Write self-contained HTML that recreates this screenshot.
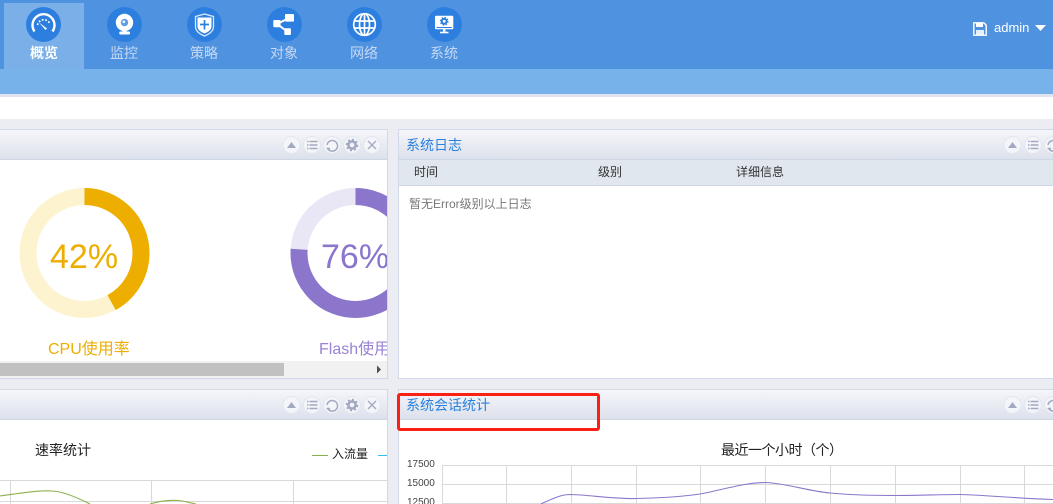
<!DOCTYPE html>
<html><head><meta charset="utf-8">
<style>
html,body{margin:0;padding:0;width:1053px;height:504px;overflow:hidden;background:#ecedf3;font-family:"Liberation Sans","Noto Sans CJK SC",sans-serif;}
#root{position:relative;width:1053px;height:504px;overflow:hidden;background:#ecedf3}
#root div,#root svg{position:absolute;box-sizing:border-box}
.t{white-space:nowrap;line-height:1}
.nav{font-size:14px;color:#c5d9f3;width:80px;text-align:center;top:46px}
.ic{width:35px;height:35px;top:7px}
.ph{background:linear-gradient(#f5f6fa,#dde1ec);border-bottom:1px solid #cfd6e6}
.panel{background:#fff;border:1px solid #d0d8ea}
</style></head><body><div id="root">
<div style="left:0;top:0;width:1053px;height:69px;background:#4f92e0"></div>
<div style="left:4px;top:3px;width:80px;height:66px;background:#7aafe8"></div>
<div style="left:0;top:69px;width:1053px;height:25px;background:#78b2ea"></div>
<div style="left:0;top:94px;width:1053px;height:3px;background:#e0e4f0"></div>
<div style="left:0;top:97px;width:1053px;height:22px;background:#fff"></div>

<svg class="ic" style="left:26px" viewBox="0 0 35 35"><circle cx="17.5" cy="17.5" r="17.5" fill="#2d7fdf"/><path d="M8.500 24.500a11 11 0 1 1 18 0" fill="none" stroke="#fff" stroke-width="2.400"/><path d="M11.500 18a6.500 6.500 0 0 1 12-2" fill="none" stroke="#fff" stroke-width="1.600" stroke-dasharray="1.800 1.600"/><path d="M13 15.500l8 6-1.500 1.500z" fill="#fff"/></svg>
<svg class="ic" style="left:107px" viewBox="0 0 35 35"><circle cx="17.5" cy="17.500" r="17.500" fill="#2d7fdf"/><circle cx="17.500" cy="15.500" r="8.700" fill="#fff"/><circle cx="17.500" cy="15.500" r="3.700" fill="#5e9fe6"/><circle cx="16.800" cy="14.800" r="1.300" fill="#fff"/><path d="M15.500 23h4v2h-4z" fill="#fff"/><rect x="12.300" y="24.500" width="10.700" height="3" rx="1" fill="#fff"/></svg>
<svg class="ic" style="left:187px" viewBox="0 0 35 35"><circle cx="17.500" cy="17.500" r="17.500" fill="#2d7fdf"/><path d="M17.500 7l9 2.500v10c0 4.500-4 7.500-9 9.500-5-2-9-5-9-9.500v-10z" fill="none" stroke="#dbe9fa" stroke-width="1.300"/><path d="M10.500 10.500h14v9c0 3.300-3.200 5.500-7 7-3.800-1.500-7-3.700-7-7z" fill="#fff"/><path d="M17.500 13v9.500M13 17.500h9" stroke="#2d7fdf" stroke-width="1.700"/></svg>
<svg class="ic" style="left:267px" viewBox="0 0 35 35"><circle cx="17.500" cy="17.500" r="17.500" fill="#2d7fdf"/><path d="M10 17l12-6M10 17l11 8" stroke="#fff" stroke-width="2"/><rect x="6.300" y="13" width="7.300" height="7.300" rx="1" fill="#fff"/><rect x="18" y="7" width="9" height="7.600" rx="1" fill="#fff"/><rect x="17.300" y="21.300" width="6.600" height="6.700" rx="1" fill="#fff"/></svg>
<svg class="ic" style="left:347px" viewBox="0 0 35 35"><circle cx="17.500" cy="17.500" r="17.500" fill="#2d7fdf"/><g fill="none" stroke="#fff" stroke-width="1.700"><circle cx="17.500" cy="17.500" r="10.800"/><ellipse cx="17.500" cy="17.500" rx="5" ry="10.800"/><path d="M17.500 7v21M7 14h21M7 21h21"/></g></svg>
<svg class="ic" style="left:427px" viewBox="0 0 35 35"><circle cx="17.500" cy="17.500" r="17.500" fill="#2d7fdf"/><rect x="8" y="8.700" width="18.300" height="13.600" rx="1" fill="#fff"/><rect x="9.500" y="20" width="15.300" height="1" fill="#2d7fdf"/><circle cx="17.200" cy="14.300" r="2.400" fill="none" stroke="#2d7fdf" stroke-width="2"/><circle cx="17.200" cy="14.300" r="3.800" fill="none" stroke="#2d7fdf" stroke-width="1.200" stroke-dasharray="1.500 1.500"/><path d="M16 22h2.500v2.700H16z" fill="#fff"/><rect x="13" y="24.700" width="8.500" height="1.600" fill="#fff"/></svg>

<div class="t nav" style="left:4px;color:#fff;font-weight:bold">概览</div>
<div class="t nav" style="left:84px">监控</div>
<div class="t nav" style="left:164px">策略</div>
<div class="t nav" style="left:244px">对象</div>
<div class="t nav" style="left:324px">网络</div>
<div class="t nav" style="left:404px">系统</div>

<svg style="left:973px;top:22px;width:14px;height:14px" viewBox="0 0 14 14"><path d="M.8.800h10l2.400 2.400v10H.8z" fill="none" stroke="#fff" stroke-width="1.400"/><rect x="3" y="1" width="7" height="4" fill="#fff"/><rect x="3" y="8" width="8" height="5" fill="#fff" opacity=".85"/></svg>
<div class="t" style="left:994px;top:21px;font-size:13px;color:#fff">admin</div>
<svg style="left:1035px;top:25px;width:11px;height:6px" viewBox="0 0 11 6"><path d="M0 0h11L5.500 6z" fill="#fff"/></svg>

<!-- top-left panel -->
<div class="panel" style="left:-2px;top:129px;width:390px;height:250px"></div>
<div class="ph" style="left:0;top:130px;width:387px;height:30px"></div>
<svg style="left:0;top:160px;width:387px;height:201px" viewBox="0 160 387 201">
<circle cx="84.500" cy="253" r="56.500" fill="none" stroke="#fdf3cf" stroke-width="17"/>
<circle cx="84.500" cy="253" r="56.500" fill="none" stroke="#edae00" stroke-width="17" stroke-dasharray="149.100 355" transform="rotate(-90 84.500 253)"/>
<circle cx="355.500" cy="253" r="56.500" fill="none" stroke="#e9e6f6" stroke-width="17"/>
<circle cx="355.500" cy="253" r="56.500" fill="none" stroke="#8b76cc" stroke-width="17" stroke-dasharray="269.800 355" transform="rotate(-90 355.500 253)"/>
</svg>
<div style="left:0;top:160px;width:387px;height:201px;overflow:hidden">
<div class="t" style="left:50px;top:80px;font-size:34px;color:#edae00;font-family:'Liberation Sans',sans-serif">42%</div>
<div class="t" style="left:321px;top:80px;font-size:34px;color:#8b76cc;font-family:'Liberation Sans',sans-serif">76%</div>
<div class="t" style="left:48px;top:182px;font-size:16px;color:#edae00">CPU使用率</div>
<div class="t" style="left:319px;top:182px;font-size:16px;color:#9a82d4">Flash使用率</div>
</div>
<div style="left:0;top:361px;width:387px;height:17px;background:#f1f1f1"></div>
<div style="left:0;top:363px;width:284px;height:13px;background:#c1c1c1"></div>
<svg style="left:376px;top:365px;width:6px;height:9px" viewBox="0 0 6 9"><path d="M1 .5l4 4-4 4z" fill="#505050"/></svg>

<!-- top-right panel -->
<div class="panel" style="left:398px;top:129px;width:660px;height:250px"></div>
<div class="ph" style="left:399px;top:130px;width:654px;height:30px"></div>
<div class="t" style="left:406px;top:138px;font-size:14px;color:#2a80dc">系统日志</div>
<div style="left:399px;top:160px;width:654px;height:26px;background:#e1e7ef;border-bottom:1px solid #d0d8e6"></div>
<div class="t" style="left:414px;top:166px;font-size:12px;color:#333">时间</div>
<div class="t" style="left:598px;top:166px;font-size:12px;color:#333">级别</div>
<div class="t" style="left:736px;top:166px;font-size:12px;color:#333">详细信息</div>
<div class="t" style="left:409px;top:198px;font-size:12px;color:#777">暂无Error级别以上日志</div>

<!-- bottom-left panel -->
<div class="panel" style="left:-2px;top:389px;width:390px;height:130px"></div>
<div class="ph" style="left:0;top:390px;width:387px;height:30px"></div>
<div class="t" style="left:35px;top:443px;font-size:14px;color:#222">速率统计</div>
<div style="left:312px;top:455px;width:16px;height:1px;background:#8bb04a"></div>
<div class="t" style="left:332px;top:448px;font-size:12px;color:#222">入流量</div>
<div style="left:378px;top:455px;width:9px;height:1px;background:#2fc0ee"></div>
<svg style="left:0;top:475px;width:387px;height:29px" viewBox="0 475 387 29">
<path d="M0 480.500H387M0 501.500H387M10.500 480V504M151.500 480V504M293.500 480V504" stroke="#d9d9d9" fill="none"/>
<path d="M0 496C15 494 38 490 52 491C62 491 78 498 90 504M150 504C160 501 170 500 178 500.500C185 501 190 503 196 504" stroke="#8bb04a" stroke-width="1.100" fill="none"/>
</svg>

<!-- bottom-right panel -->
<div class="panel" style="left:398px;top:389px;width:660px;height:130px"></div>
<div class="ph" style="left:399px;top:390px;width:654px;height:30px"></div>
<div class="t" style="left:406px;top:398px;font-size:14px;color:#2a80dc">系统会话统计</div>
<div class="t" style="left:721px;top:443px;font-size:14px;color:#222;letter-spacing:-.5px">最近一个小时（个）</div>
<div class="t" style="left:407px;top:460px;font-size:10px;color:#444">17500</div>
<div class="t" style="left:407px;top:479px;font-size:10px;color:#444">15000</div>
<div class="t" style="left:407px;top:498px;font-size:10px;color:#444">12500</div>
<svg style="left:430px;top:460px;width:623px;height:44px" viewBox="430 460 623 44">
<path d="M442 465.500H1053M442 484.500H1053M442 503.500H1053M442.500 465V504M506.500 465V504M571.500 465V504M636.500 465V504M700.500 465V504M765.500 465V504M830.500 465V504M895.500 465V504M960.500 465V504M1024.500 465V504" stroke="#d9d9d9" fill="none"/>
<path d="M541 504C552 499 560 494.500 571 494.500C590 495 612 499 636 498.500C660 498 680 497 700 494C722 490 745 482.500 765 482.500C785 483 808 491 830 493C850 495 872 495.500 895 495.500C920 495.500 940 494.500 960 494.500C985 495 1010 498 1053 499.500" stroke="#8b76cc" stroke-width="1.100" fill="none"/>
</svg>

<!-- buttons -->
<svg style="left:282px;top:135px;width:100px;height:20px" viewBox="0 0 100 20"><g fill="#f4f5f9" stroke="#e4e6ef"><circle cx="9.500" cy="10" r="8.500"/><circle cx="30" cy="10" r="8.500"/><circle cx="50" cy="10" r="8.500"/><circle cx="70" cy="10" r="8.500"/><circle cx="90" cy="10" r="8.500"/></g><path d="M5 13L9.500 7l4.500 6z" fill="#a3a9c2"/><path d="M27.500 6.500h8M27.500 10h8M27.500 13.500h8M25 6.500h1.500M25 10h1.500M25 13.500h1.500" stroke="#a3a9c2" stroke-width="1.400"/><path d="M46 14a5.300 5.300 0 1 0-1-4M44.500 13.500h3.500" fill="none" stroke="#a3a9c2" stroke-width="1.500"/><circle cx="70" cy="10" r="3.600" fill="none" stroke="#a3a9c2" stroke-width="2.600"/><circle cx="70" cy="10" r="5.400" fill="none" stroke="#a3a9c2" stroke-width="1.800" stroke-dasharray="2 2.200"/><path d="M86 6l8 8M94 6l-8 8" stroke="#a3a9c2" stroke-width="1.300"/></svg>
<svg style="left:282px;top:395px;width:100px;height:20px" viewBox="0 0 100 20"><g fill="#f4f5f9" stroke="#e4e6ef"><circle cx="9.500" cy="10" r="8.500"/><circle cx="30" cy="10" r="8.500"/><circle cx="50" cy="10" r="8.500"/><circle cx="70" cy="10" r="8.500"/><circle cx="90" cy="10" r="8.500"/></g><path d="M5 13L9.500 7l4.500 6z" fill="#a3a9c2"/><path d="M27.500 6.500h8M27.500 10h8M27.500 13.500h8M25 6.500h1.500M25 10h1.500M25 13.500h1.500" stroke="#a3a9c2" stroke-width="1.400"/><path d="M46 14a5.300 5.300 0 1 0-1-4M44.500 13.500h3.500" fill="none" stroke="#a3a9c2" stroke-width="1.500"/><circle cx="70" cy="10" r="3.600" fill="none" stroke="#a3a9c2" stroke-width="2.600"/><circle cx="70" cy="10" r="5.400" fill="none" stroke="#a3a9c2" stroke-width="1.800" stroke-dasharray="2 2.200"/><path d="M86 6l8 8M94 6l-8 8" stroke="#a3a9c2" stroke-width="1.300"/></svg>
<svg style="left:1003px;top:135px;width:50px;height:20px" viewBox="0 0 50 20"><g fill="#f4f5f9" stroke="#e4e6ef"><circle cx="9.500" cy="10" r="8.500"/><circle cx="30" cy="10" r="8.500"/><circle cx="50" cy="10" r="8.500"/></g><path d="M5 13L9.500 7l4.500 6z" fill="#a3a9c2"/><path d="M27.500 6.500h8M27.500 10h8M27.500 13.500h8M25 6.500h1.500M25 10h1.500M25 13.500h1.500" stroke="#a3a9c2" stroke-width="1.400"/><path d="M46 14a5.300 5.300 0 1 0-1-4M44.500 13.500h3.500" fill="none" stroke="#a3a9c2" stroke-width="1.500"/></svg>
<svg style="left:1003px;top:395px;width:50px;height:20px" viewBox="0 0 50 20"><g fill="#f4f5f9" stroke="#e4e6ef"><circle cx="9.500" cy="10" r="8.500"/><circle cx="30" cy="10" r="8.500"/><circle cx="50" cy="10" r="8.500"/></g><path d="M5 13L9.500 7l4.500 6z" fill="#a3a9c2"/><path d="M27.500 6.500h8M27.500 10h8M27.500 13.500h8M25 6.500h1.500M25 10h1.500M25 13.500h1.500" stroke="#a3a9c2" stroke-width="1.400"/><path d="M46 14a5.300 5.300 0 1 0-1-4M44.500 13.500h3.500" fill="none" stroke="#a3a9c2" stroke-width="1.500"/></svg>

<!-- red annotation -->
<div style="left:397px;top:393px;width:203px;height:38px;border:3px solid #fb2014;border-radius:3px"></div>
</div></body></html>
